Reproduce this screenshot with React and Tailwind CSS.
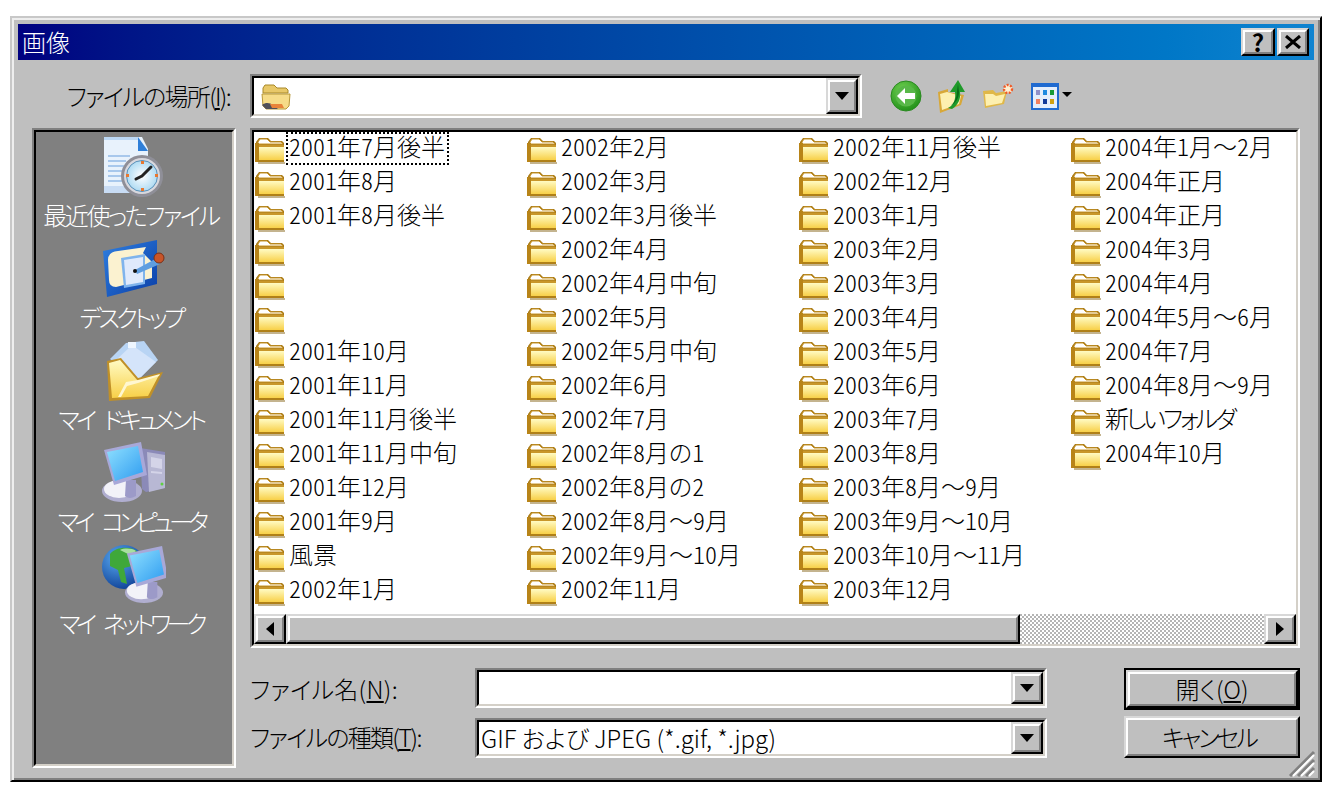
import React from "react";

const FONT = "font-['Noto_Sans_CJK_JP','Noto_Sans',sans-serif]";

const columns = [
  ["2001年7月後半", "2001年8月", "2001年8月後半", "", "", "", "2001年10月", "2001年11月", "2001年11月後半", "2001年11月中旬", "2001年12月", "2001年9月", "風景", "2002年1月"],
  ["2002年2月", "2002年3月", "2002年3月後半", "2002年4月", "2002年4月中旬", "2002年5月", "2002年5月中旬", "2002年6月", "2002年7月", "2002年8月の1", "2002年8月の2", "2002年8月～9月", "2002年9月～10月", "2002年11月"],
  ["2002年11月後半", "2002年12月", "2003年1月", "2003年2月", "2003年3月", "2003年4月", "2003年5月", "2003年6月", "2003年7月", "2003年8月", "2003年8月～9月", "2003年9月～10月", "2003年10月～11月", "2003年12月"],
  ["2004年1月～2月", "2004年正月", "2004年正月", "2004年3月", "2004年4月", "2004年5月～6月", "2004年7月", "2004年8月～9月", "新しいフォルダ", "2004年10月"],
];

function Gradients() {
  return (
    <svg className="absolute w-0 h-0" aria-hidden="true">
      <defs>
        <linearGradient id="folderFront" x1="0" y1="0" x2="0" y2="1">
          <stop offset="0" stopColor="#fffbc4" />
          <stop offset="1" stopColor="#f8d048" />
        </linearGradient>
        <linearGradient id="screen" x1="0" y1="0" x2="1" y2="1">
          <stop offset="0" stopColor="#8fe0ff" />
          <stop offset="1" stopColor="#2f9cf0" />
        </linearGradient>
        <linearGradient id="tile" x1="0" y1="0" x2="1" y2="1">
          <stop offset="0" stopColor="#2f7fe0" />
          <stop offset="1" stopColor="#0a3fa8" />
        </linearGradient>
        <radialGradient id="globe" cx="0.35" cy="0.3" r="0.8">
          <stop offset="0" stopColor="#58a8f0" />
          <stop offset="1" stopColor="#0a3a90" />
        </radialGradient>
        <radialGradient id="clockFace" cx="0.5" cy="0.5" r="0.6">
          <stop offset="0" stopColor="#ffffff" />
          <stop offset="1" stopColor="#9fd4f0" />
        </radialGradient>
        <radialGradient id="backBall" cx="0.4" cy="0.3" r="0.8">
          <stop offset="0" stopColor="#6fd050" />
          <stop offset="1" stopColor="#1a8a14" />
        </radialGradient>
      </defs>
    </svg>
  );
}

function Folder() {
  return (
    <svg width="31" height="28" viewBox="0 0 31 28" className="shrink-0 mt-[4px]">
      <path d="M1 24V6l3-4h9l3 3h11l2 2v17l-1 2H3z" fill="#a87a18" />
      <path d="M3 8V6l2-3h7l3 3h11l2 2z" fill="#fff" stroke="#c8962a" strokeWidth="1" />
      <path d="M4 11h25v13H4z" fill="url(#folderFront)" />
      <path d="M3 9h26v2H3z" fill="#c8962a" />
      <path d="M0 7h4v19H0z" fill="#b88418" />
      <path d="M3 24h26v2H3z" fill="#b08018" />
      <path d="M3 26h27v2H3z" fill="#8a6a20" opacity="0.5" />
    </svg>
  );
}

function ComboFolder() {
  return (
    <svg width="32" height="30" viewBox="0 0 32 30">
      <path d="M3 6l2-3h9l3 3h9l2 2v3H3z" fill="#e8c868" stroke="#a88828" />
      <path d="M2 12h28l-1 12-3 3H6l-3-3z" fill="#f6dc88" stroke="#b89838" />
      <path d="M2 23c4-3 8-2 11 0l5 4H6z" fill="#50505a" />
      <path d="M10 22h12l2 4H12z" fill="#e8843a" />
    </svg>
  );
}

function RecentIcon() {
  return (
    <svg width="64" height="62" viewBox="0 0 64 62">
      <path d="M2 1h38l6 12v38H2z" fill="#e8f2fc" />
      <path d="M36 1l10 14H36z" fill="#2f7fd8" />
      <path d="M2 1h34v3H2z" fill="#bcd8f4" />
      <path d="M2 50h40v7H2z" fill="#c8dcf4" />
      <path d="M6 20h22M6 25h18M6 30h16M6 35h14M6 40h14M6 45h16" stroke="#a8c8ec" strokeWidth="2" />
      <circle cx="40" cy="40" r="21" fill="#8f8f98" />
      <circle cx="40" cy="40" r="18" fill="#d8d8de" />
      <circle cx="40" cy="40" r="15.5" fill="url(#clockFace)" stroke="#5a90b8" />
      <path d="M40 40l9-9M40 40l-6 3" stroke="#222" strokeWidth="3" strokeLinecap="round" />
      <path d="M24 38h3v3h-3zM53 38h3v3h-3zM39 25h3v3h-3zM39 52h3v3h-3z" fill="#e87830" />
    </svg>
  );
}

function DesktopIcon() {
  return (
    <svg width="64" height="62" viewBox="0 0 64 62">
      <path d="M1 13L55 2v44L5 59z" fill="url(#tile)" />
      <path d="M6 22Q6 14 16 13l28-4-3 6 9 9v16L14 49Q7 49 7 42z" fill="#fbf2d0" />
      <path d="M19 20l24-4v30l-21 4z" fill="#7fb4ec" />
      <path d="M22 22l19-3v25l-17 3z" fill="#dfeafc" />
      <path d="M33 32l22-12 3 6-23 10z" fill="#5f9ee0" />
      <circle cx="57" cy="20" r="5" fill="#c8552a" stroke="#7a3018" />
      <circle cx="33" cy="33" r="2" fill="#111" />
    </svg>
  );
}

function MyDocsIcon() {
  return (
    <svg width="64" height="62" viewBox="0 0 64 62">
      <path d="M8 19L24 3 42 1l14 19-20 20z" fill="#b8d4f4" />
      <path d="M13 21L30 5l24 17-18 18z" fill="#d4e4fa" />
      <path d="M26 2h8v6h-8z" fill="#eef6ff" />
      <path d="M5 21l14-3 17 20 25-6-13 26L7 61z" fill="#c09028" />
      <path d="M7 23l11-3 18 21 21-6-11 21L10 58z" fill="url(#folderFront)" />
      <path d="M16 57l8-15 12-2 22-6-1 2-21 7-11 3-6 11z" fill="#fff7d0" />
    </svg>
  );
}

function Monitor() {
  return (
    <g>
      <ellipse cx="20" cy="49" rx="20" ry="11" fill="#b0aed0" />
      <ellipse cx="17" cy="47" rx="15" ry="9" fill="#f2f2f8" />
      <path d="M24 38h10v16c-5 3-9 2-11 0z" fill="#9c9ac8" />
      <path d="M2 8l37-8 6 33-33 10z" fill="#a8a8d8" />
      <path d="M5 10l31-6 5 26-28 9z" fill="url(#screen)" />
    </g>
  );
}

function ComputerIcon() {
  return (
    <svg width="64" height="62" viewBox="0 0 64 62">
      <path d="M38 6l25 4v36l-19 4-4-3z" fill="#8b8ab8" />
      <path d="M45 10l18 3v33l-16 4z" fill="#b8b8d4" />
      <path d="M49 15l11 2v10l-11-2zM49 29l11 1v2l-11-1z" fill="#d4d4e8" />
      <circle cx="60" cy="42" r="1.5" fill="#5fd040" />
      <Monitor />
    </svg>
  );
}

function NetworkIcon() {
  return (
    <svg width="64" height="64" viewBox="0 0 64 64">
      <circle cx="22" cy="23" r="22" fill="url(#globe)" />
      <path d="M8 10c6-8 22-8 28-2l-8 6 2 8-8 2 3 16-6-2-3-12-8-4z" fill="#3fa83a" />
      <path d="M18 6c4-2 12-2 16 1l-6 4z" fill="#a8e0a0" />
      <g transform="translate(23 2) scale(0.95)">
        <Monitor />
      </g>
    </svg>
  );
}

function SideItem({ icon, label, track = "" }) {
  const [first, second] = label.split(" ");
  return (
    <div className="h-[102px] pt-[4px] flex flex-col items-center">
      <div className="w-[64px] h-[62px]">{icon}</div>
      <div className={`h-[34px] leading-[34px] pr-[6px] text-white whitespace-nowrap ${track}`}>
        {first}
        {second && <span className="tracking-[5px]"> </span>}
        {second}
      </div>
    </div>
  );
}

function Sunken({ className = "", innerClass = "", children }) {
  return (
    <div className={`border-2 border-t-[#808080] border-l-[#808080] border-r-white border-b-white ${className}`}>
      <div className={`h-full border-2 border-t-black border-l-black border-r-[#d4d0c8] border-b-[#d4d0c8] ${innerClass}`}>
        {children}
      </div>
    </div>
  );
}

function Raised({ className = "", children }) {
  return (
    <div className={`border-2 border-t-[#d8d8d8] border-l-[#d8d8d8] border-r-black border-b-black bg-[#bfbfbf] ${className}`}>
      <div className="h-full border-2 border-t-white border-l-white border-r-[#808080] border-b-[#808080] flex items-center justify-center">
        {children}
      </div>
    </div>
  );
}

function DropArrow() {
  return (
    <svg width="14" height="8" viewBox="0 0 14 8">
      <path d="M0 0h14L7 8z" fill="#000" />
    </svg>
  );
}

function Combo({ className = "", height, children }) {
  return (
    <Sunken className={className} innerClass="bg-white flex">
      <div className="flex-1 min-w-0 flex items-center whitespace-nowrap">{children}</div>
      <Raised className={`w-[32px] ${height} shrink-0`}>
        <DropArrow />
      </Raised>
    </Sunken>
  );
}

function Toolbar() {
  return (
    <div className="flex items-center ml-[28px]">
      <svg width="32" height="32" viewBox="0 0 32 32">
        <circle cx="16" cy="16" r="15" fill="url(#backBall)" stroke="#2a8a20" />
        <circle cx="16" cy="16" r="10.5" fill="#58b848" />
        <path d="M7 16l8-8v5h10v6H15v5z" fill="#fff" />
      </svg>
      <svg width="28" height="34" viewBox="0 0 28 34" className="ml-[15px]">
        <path d="M1 13l10-3v3l16 3-3 10-21 8z" fill="#d8a838" />
        <path d="M3 15l7-2 14 4-2 8-17 6z" fill="#fdf0b0" />
        <path d="M11 29c6-3 8-9 7-16h-5l8-12 7 12h-5c1 7-2 13-8 17z" fill="#1f9a2a" />
        <path d="M13 27c5-3 7-9 7-15l1-7 1 8c0 6-3 11-9 14z" fill="#0a6a18" />
      </svg>
      <svg width="32" height="28" viewBox="0 0 32 28" className="ml-[17px]">
        <path d="M1 9l10-1 3 3 11-2-3 13-19 4z" fill="#e0b848" />
        <path d="M3 12l8 0 3 2 9-2-3 9-16 3z" fill="#fdf0b0" />
        <circle cx="26" cy="7" r="4" fill="#fff0d0" stroke="#f05a28" strokeWidth="2.4" strokeDasharray="2 1.4" />
      </svg>
      <svg width="30" height="28" viewBox="0 0 30 28" className="ml-[16px]">
        <path d="M1 1h28v27H1z" fill="#1f6ad0" />
        <path d="M3 5h24v21H3z" fill="#e4eefc" />
        <path d="M6 8h4v5H6z" fill="#9090c8" />
        <path d="M13 8h4v5h-4z" fill="#1f8ae0" />
        <path d="M20 8h4v5h-4z" fill="#189a38" />
        <path d="M6 17h4v5H6z" fill="#f08060" />
        <path d="M13 17h4v5h-4z" fill="#103a9a" />
        <path d="M20 17h4v5h-4z" fill="#d0a010" />
      </svg>
      <svg width="10" height="5" viewBox="0 0 10 5" className="ml-[2px] mb-[4px]">
        <path d="M0 0h10L5 5z" fill="#000" />
      </svg>
    </div>
  );
}

// the wave dash keeps its full width, digits stay half width
function FileName({ name }) {
  const parts = name.split("～");
  if (parts.length === 1) return name;
  return (
    <>
      {parts[0]}
      <span className="[font-feature-settings:normal]">～</span>
      {parts[1]}
    </>
  );
}

function FileList() {
  return (
    <Sunken className="h-[520px]" innerClass="bg-white flex flex-col">
      <div className="flex-1 min-h-0 grid grid-cols-[repeat(4,272px)] pl-[1px] [font-feature-settings:'palt','hwid']">
        {columns.map((col, c) => (
          <div key={c} className="flex flex-col">
            {col.map((name, i) => (
              <div key={i} className="h-[34px] flex items-start">
                <Folder />
                <span
                  className={`h-[33px] leading-[28px] pl-[3px] pr-[4px] whitespace-nowrap ${
                    name === "新しいフォルダ" ? "tracking-[-3px]" : ""
                  } ${c === 0 && i === 0 ? "outline-2 outline-dotted outline-black -outline-offset-2" : ""}`}
                >
                  <FileName name={name} />
                </span>
              </div>
            ))}
          </div>
        ))}
      </div>
      <div className="h-[30px] shrink-0 flex">
        <Raised className="w-[32px] h-full">
          <svg width="8" height="14" viewBox="0 0 8 14">
            <path d="M8 0v14L0 7z" fill="#000" />
          </svg>
        </Raised>
        <Raised className="w-[734px] h-full" />
        <div className="flex-1 bg-[repeating-conic-gradient(#ffffff_0_25%,#b4b4b4_0_50%)] bg-[length:4px_4px]" />
        <Raised className="w-[32px] h-full">
          <svg width="8" height="14" viewBox="0 0 8 14">
            <path d="M0 0v14l8-7z" fill="#000" />
          </svg>
        </Raised>
      </div>
    </Sunken>
  );
}

export default function App() {
  return (
    <div className={`min-h-screen bg-white pt-[16px] pl-[10px] text-[24px] text-black ${FONT} [font-feature-settings:'palt'] font-light`}>
      <Gradients />
      <div className="w-[1312px] h-[766px] bg-[#bfbfbf] border-2 border-t-[#c8c8c8] border-l-[#c8c8c8] border-r-black border-b-black shadow-[inset_2px_2px_0_#eeeeee,inset_-2px_-2px_0_#808080] p-[6px] flex flex-col">
        {/* title bar */}
        <div className="h-[36px] shrink-0 flex items-center pl-[4px] pr-[5px] bg-gradient-to-r from-[#000080] to-[#1084d0]">
          <span className="flex-1 text-white leading-[36px]">画像</span>
          <Raised className="w-[34px] h-[28px] font-bold">?</Raised>
          <Raised className="w-[32px] h-[28px] ml-[2px] font-bold">
            <svg width="16" height="14" viewBox="0 0 16 14">
              <path d="M1 1l14 12M15 1L1 13" stroke="#000" strokeWidth="3" />
            </svg>
          </Raised>
        </div>

        <div className="flex-1 min-h-0 pl-[14px] flex flex-col">
          {/* look in row */}
          <div className="mt-[14px] h-[44px] shrink-0 flex items-center">
            <div className="w-[200px] pr-[2px] text-right whitespace-nowrap tracking-[-1.7px]">
              ファイルの場所(<span className="underline">I</span>):
            </div>
            <Combo className="ml-[18px] w-[612px] h-[44px]" height="h-full">
              <div className="pl-[6px] pt-[2px] flex"><ComboFolder /></div>
            </Combo>
            <Toolbar />
          </div>

          <div className="mt-[10px] flex gap-[14px]">
            {/* places bar */}
            <Sunken className="w-[204px] h-[640px]" innerClass="bg-[#808080]">
              <SideItem icon={<RecentIcon />} label="最近使ったファイル" track="tracking-[-2.4px]" />
              <SideItem icon={<DesktopIcon />} label="デスクトップ" track="tracking-[-3.7px]" />
              <SideItem icon={<MyDocsIcon />} label="マイ ドキュメント" track="tracking-[-3.8px]" />
              <SideItem icon={<ComputerIcon />} label="マイ コンピュータ" track="tracking-[-4.7px]" />
              <SideItem icon={<NetworkIcon />} label="マイ ネットワーク" track="tracking-[-4.5px]" />
            </Sunken>

            <div className="w-[1050px]">
              <FileList />
              <div className="mt-[20px] flex">
                <div className="w-[225px]">
                  <div className="h-[42px] leading-[42px] whitespace-nowrap tracking-[0.3px]">
                    ファイル名(<span className="underline">N</span>):
                  </div>
                  <div className="mt-[6px] h-[42px] leading-[42px] whitespace-nowrap tracking-[-1.7px]">
                    ファイルの種類(<span className="underline">T</span>):
                  </div>
                </div>
                <div className="w-[572px]">
                  <Combo className="h-[40px]" height="h-full" />
                  <Combo className="mt-[10px] h-[40px]" height="h-full">
                    <span className="pl-[2px]">GIF および JPEG (*.gif, *.jpg)</span>
                  </Combo>
                </div>
                <div className="ml-[77px] w-[176px]">
                  <div className="h-[42px] border-2 border-black">
                    <Raised className="h-full border-0">
                      <span>開く(<span className="underline">O</span>)</span>
                    </Raised>
                  </div>
                  <Raised className="mt-[6px] h-[42px] tracking-[-3px]">
                    <span className="pr-[6px]">キャンセル</span>
                  </Raised>
                </div>
              </div>
            </div>
          </div>
        </div>

        {/* size grip */}
        <div className="relative h-0">
          <svg width="28" height="28" viewBox="0 0 28 28" className="absolute right-[-2px] bottom-[-4px]">
            <path d="M26 2L2 26M26 10L10 26M26 18L18 26" stroke="#808080" strokeWidth="3" />
            <path d="M26 5L5 26M26 13L13 26M26 21L21 26" stroke="#fff" strokeWidth="2" />
          </svg>
        </div>
      </div>
    </div>
  );
}
